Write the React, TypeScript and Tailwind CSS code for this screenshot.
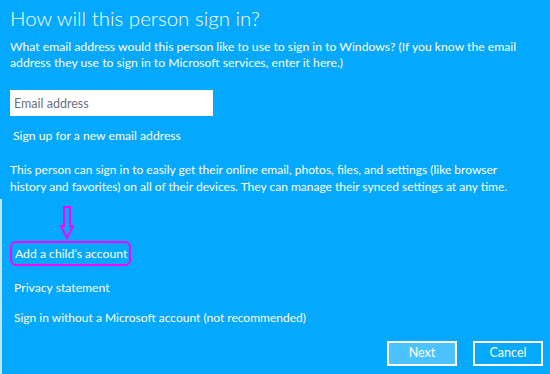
import { useState } from "react";

function DownArrow() {
  return (
    <svg width="14" height="34" viewBox="0 0 14 34" className="ml-[50px]">
      <path
        d="M4 1 H10 V20 H13 L7 32 L1 20 H4 Z"
        fill="none"
        stroke="#ff00ff"
        strokeWidth="2"
      />
    </svg>
  );
}

export default function App() {
  const [email, setEmail] = useState("");

  return (
    <div className="relative h-[374px] w-[550px] overflow-hidden bg-[#04a8fd] text-white font-['Lato',sans-serif]">
      <div className="absolute bottom-0 left-0 top-[199px] w-[2px] bg-[#bfe8ff]" />
      <div className="flex flex-col px-[10px]">
        <h1 className="mt-[2px] whitespace-nowrap text-[20.5px] font-light leading-[32px]">
          How will this person sign in?
        </h1>
        <p className="mt-[5px] whitespace-nowrap text-[12.2px] leading-[16px]">
          What email address would this person like to use to sign in to Windows? (If you know the email
          <br />
          address they use to sign in to Microsoft services, enter it here.)
        </p>
        <input
          value={email}
          onChange={(e) => setEmail(e.target.value)}
          placeholder="Email address"
          className="mt-[19px] h-[26px] w-[203px] bg-white px-[4px] text-[12.5px] text-gray-800 outline-none placeholder:text-gray-500"
        />
        <a className="mt-[11px] ml-[3px] whitespace-nowrap text-[12.2px] leading-[17px]">
          Sign up for a new email address
        </a>
        <p className="mt-[17px] whitespace-nowrap text-[12px] leading-[17px]">
          This person can sign in to easily get their online email, photos, files, and settings (like browser
          <br />
          history and favorites) on all of their devices. They can manage their synced settings at any time.
        </p>
        <div className="mt-[11px]">
          <DownArrow />
        </div>
        <div className="mt-[1px] flex h-[25px] w-[121px] items-center rounded-[6px] border-2 border-[#ff00ff] pl-[3px]">
          <span className="whitespace-nowrap text-[12.2px] leading-[17px]">Add a child’s account</span>
        </div>
        <a className="mt-[13px] ml-[4px] whitespace-nowrap text-[12.2px] leading-[17px]">
          Privacy statement
        </a>
        <a className="mt-[13px] ml-[4px] whitespace-nowrap text-[12px] leading-[17px]">
          Sign in without a Microsoft account (not recommended)
        </a>
        <div className="mt-[15px] -mr-[3px] flex justify-end gap-[16px]">
          <button className="h-[25px] w-[70px] border-2 border-white bg-[#4cc3ff] text-[12.5px]">
            Next
          </button>
          <button className="h-[25px] w-[70px] border-2 border-white text-[12.5px]">
            Cancel
          </button>
        </div>
      </div>
    </div>
  );
}
